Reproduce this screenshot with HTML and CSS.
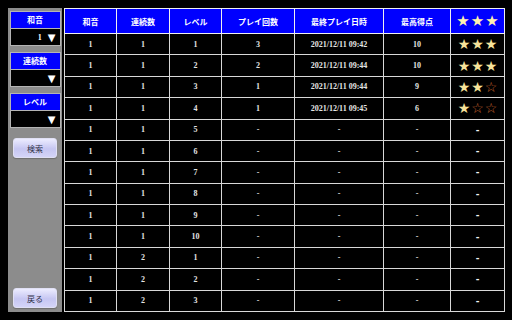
FILE: index.html
```html
<!DOCTYPE html>
<html lang="ja">
<head>
    <meta charset="UTF-8">
    <title>記録</title>
    <link rel="stylesheet" href="styles.css">
</head>
<body>
    <div class="sidebar">
        <div class="select-group">
            <div class="select-label">和音</div>
            <div class="select-value"><span>1</span><span class="arrow">▼</span></div>
        </div>
        <div class="select-group">
            <div class="select-label">連続数</div>
            <div class="select-value"><span></span><span class="arrow">▼</span></div>
        </div>
        <div class="select-group">
            <div class="select-label">レベル</div>
            <div class="select-value"><span></span><span class="arrow">▼</span></div>
        </div>
        <button class="side-btn">検索</button>
        <button class="side-btn back-btn">戻る</button>
    </div>

    <table class="records">
        <thead>
            <tr>
                <th class="c1">和音</th>
                <th class="c2">連続数</th>
                <th class="c3">レベル</th>
                <th class="c4">プレイ回数</th>
                <th class="c5">最終プレイ日時</th>
                <th class="c6">最高得点</th>
                <th class="c7 stars head-stars">★★★</th>
            </tr>
        </thead>
        <tbody id="rows"></tbody>
    </table>

    <script>
        // chord, combo, level, plays, last played, best, stars
        const records = [
            [1, 1, 1, 3, "2021/12/11 09:42", 10, 3],
            [1, 1, 2, 2, "2021/12/11 09:44", 10, 3],
            [1, 1, 3, 1, "2021/12/11 09:44", 9, 2],
            [1, 1, 4, 1, "2021/12/11 09:45", 6, 1],
            [1, 1, 5], [1, 1, 6], [1, 1, 7], [1, 1, 8], [1, 1, 9], [1, 1, 10],
            [1, 2, 1], [1, 2, 2], [1, 2, 3]
        ];

        const tbody = document.getElementById('rows');
        records.forEach(r => {
            const tr = document.createElement('tr');
            let starCell;
            if (r.length > 3) {
                let s = '';
                for (let i = 0; i < 3; i++) {
                    s += i < r[6] ? '<span class="star-on">★</span>' : '<span class="star-off">☆</span>';
                }
                starCell = `<td class="stars">${s}</td>`;
            } else {
                starCell = '<td class="dash">-</td>';
            }
            tr.innerHTML = `<td>${r[0]}</td><td>${r[1]}</td><td>${r[2]}</td>` +
                `<td>${r[3] ?? '-'}</td><td>${r[4] ?? '-'}</td><td>${r[5] ?? '-'}</td>` + starCell;
            tbody.appendChild(tr);
        });
    </script>
</body>
</html>
```

FILE: styles.css
```css
body {
    margin: 0;
    padding: 8px 0 0 8px;
    width: 512px;
    height: 320px;
    box-sizing: border-box;
    background: #000;
    display: flex;
    align-items: flex-start;
    gap: 2px;
    font-family: "Noto Sans CJK JP", "DejaVu Sans", sans-serif;
    overflow: hidden;
}
.sidebar {
    width: 54px;
    height: 304px;
    box-sizing: border-box;
    background: #8c8c8c;
    padding: 3px 2px 4px 2px;
    display: flex;
    flex-direction: column;
    align-items: center;
}
.select-group {
    width: 49px;
    border: 1px solid #b4b4b4;
    margin-bottom: 6px;
}
.select-label {
    background: #0000ff;
    color: #fff;
    height: 16px;
    font-size: 8px;
    font-weight: bold;
    line-height: 16px;
    text-align: center;
    border-bottom: 1px solid #b4b4b4;
}
.select-value {
    background: #000;
    color: #fff;
    height: 16px;
    display: flex;
    justify-content: flex-end;
    align-items: center;
    gap: 6px;
    padding-right: 4px;
    font-family: "Liberation Serif", serif;
    font-weight: bold;
    font-size: 8px;
}
.arrow {
    font-size: 10px;
    font-family: "DejaVu Sans", sans-serif;
}
.side-btn {
    width: 44px;
    height: 20px;
    margin-top: 4px;
    border: 1px solid #e0e0f4;
    border-radius: 3px;
    background: linear-gradient(#ececff, #c6c6f2 55%, #d4d4f8);
    color: #303048;
    font-family: "Noto Sans CJK JP", sans-serif;
    font-size: 8px;
    padding: 0;
    box-shadow: 0 1px 1px #6e6e6e;
}
.back-btn {
    margin-top: auto;
}
.records {
    width: 440px;
    height: 304px;
    flex: none;
    border-collapse: collapse;
    table-layout: fixed;
    border: 1px solid #f0f0f0;
}
.records th,
.records td {
    border: 1px solid #d8d8d8;
    text-align: center;
    padding: 0;
}
.records th {
    background: #0000ff;
    color: #fff;
    font-size: 8px;
    font-weight: bold;
    height: 24px;
    border-color: #f0f0f0;
}
.records td {
    background: #000;
    color: #e4e4e4;
    font-family: "Liberation Serif", serif;
    font-weight: bold;
    font-size: 8px;
    height: 19px;
}
.c1 { width: 51px; }
.c2 { width: 52px; }
.c3 { width: 51px; }
.c4 { width: 72px; }
.c5 { width: 88px; }
.c6 { width: 66px; }
.c7 { width: 53px; }
.records .stars {
    font-family: "DejaVu Sans", sans-serif;
    font-size: 14px;
    letter-spacing: 1px;
    text-indent: 1px;
    line-height: 1;
}
.records .head-stars {
    color: #fff0b0;
    font-size: 15px;
}
.star-on {
    color: #f6e29a;
}
.star-off {
    color: #c8602c;
}
.records .dash {
    font-family: "DejaVu Sans", sans-serif;
    font-size: 9px;
    color: #f4f4f4;
}
```
